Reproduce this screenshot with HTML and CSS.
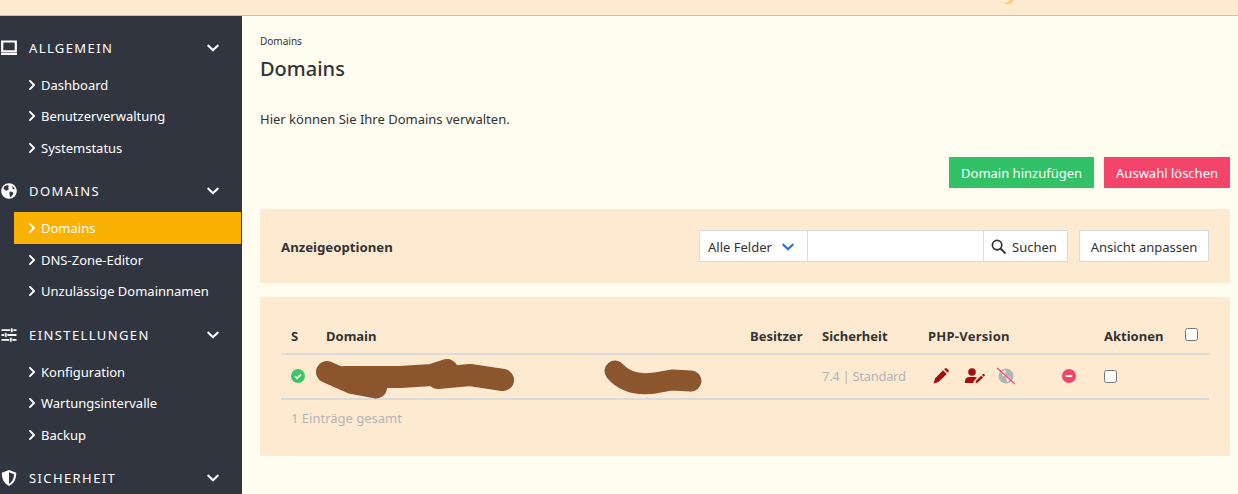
FILE: index.html
```html
<!DOCTYPE html>
<html lang="de">
<head>
<meta charset="utf-8">
<title>Domains</title>
<link rel="stylesheet" href="styles.css">
</head>
<body>
<header class="topbar">
  <svg class="swoosh" width="10" height="4" viewBox="0 0 10 4"><path d="M0 2.6C3 3 5 2.4 7 0h2.4C8 2.6 6 4 3 4 1.600 4 .6 3.400 0 2.600z" fill="#fbc25e"/></svg>
</header>
<div class="shell">
  <nav class="sidebar">
    <div class="nav-head">
      <svg class="nav-icon" viewBox="0 0 18 16"><path d="M2.200 1.500h13.600v9.800H2.200z" fill="none" stroke="#fff" stroke-width="2.200"/><path d="M1 13h16v2H1z" fill="#fff"/></svg>
      <span class="nav-title">ALLGEMEIN</span>
      <svg class="nav-chev" viewBox="0 0 448 512"><path d="M207.029 381.476L12.686 187.132c-9.373-9.373-9.373-24.569 0-33.941l22.667-22.667c9.357-9.357 24.522-9.375 33.901-.04L224 284.505l154.745-154.021c9.379-9.335 24.544-9.317 33.901.04l22.667 22.667c9.373 9.373 9.373 24.569 0 33.941L240.971 381.476c-9.373 9.372-24.569 9.372-33.942 0z"/></svg>
    </div>
    <ul class="nav-list">
      <li class="nav-item"><svg class="item-chev" viewBox="0 0 320 512"><path d="M285.476 272.971L91.132 467.314c-9.373 9.373-24.569 9.373-33.941 0l-22.667-22.667c-9.357-9.357-9.375-24.522-.04-33.901L188.505 256 34.484 101.255c-9.335-9.379-9.317-24.544.04-33.901l22.667-22.667c9.373-9.373 24.569-9.373 33.941 0L285.475 239.030c9.373 9.372 9.373 24.568.001 33.941z"/></svg>Dashboard</li>
      <li class="nav-item"><svg class="item-chev" viewBox="0 0 320 512"><path d="M285.476 272.971L91.132 467.314c-9.373 9.373-24.569 9.373-33.941 0l-22.667-22.667c-9.357-9.357-9.375-24.522-.04-33.901L188.505 256 34.484 101.255c-9.335-9.379-9.317-24.544.04-33.901l22.667-22.667c9.373-9.373 24.569-9.373 33.941 0L285.475 239.030c9.373 9.372 9.373 24.568.001 33.941z"/></svg>Benutzerverwaltung</li>
      <li class="nav-item"><svg class="item-chev" viewBox="0 0 320 512"><path d="M285.476 272.971L91.132 467.314c-9.373 9.373-24.569 9.373-33.941 0l-22.667-22.667c-9.357-9.357-9.375-24.522-.04-33.901L188.505 256 34.484 101.255c-9.335-9.379-9.317-24.544.04-33.901l22.667-22.667c9.373-9.373 24.569-9.373 33.941 0L285.475 239.030c9.373 9.372 9.373 24.568.001 33.941z"/></svg>Systemstatus</li>
    </ul>
    <div class="nav-head">
      <svg class="nav-icon" viewBox="0 0 16 16"><circle cx="8" cy="8" r="7.800" fill="#fff"/><path d="M3 3.500l3.500-1.500 1.500 1-1 1.500 1 1.500-2 1.500-1.500 0-2-2zM8.500 8.500l3 .5 1 1.500-2 3-1.500.5-.5-2.500zM11 2.800l2 1.700.8 2-2-.5z" fill="#31353f"/></svg>
      <span class="nav-title">DOMAINS</span>
      <svg class="nav-chev" viewBox="0 0 448 512"><path d="M207.029 381.476L12.686 187.132c-9.373-9.373-9.373-24.569 0-33.941l22.667-22.667c9.357-9.357 24.522-9.375 33.901-.04L224 284.505l154.745-154.021c9.379-9.335 24.544-9.317 33.901.04l22.667 22.667c9.373 9.373 9.373 24.569 0 33.941L240.971 381.476c-9.373 9.372-24.569 9.372-33.942 0z"/></svg>
    </div>
    <ul class="nav-list nav-list-wide">
      <li class="nav-item is-active"><svg class="item-chev" viewBox="0 0 320 512"><path d="M285.476 272.971L91.132 467.314c-9.373 9.373-24.569 9.373-33.941 0l-22.667-22.667c-9.357-9.357-9.375-24.522-.04-33.901L188.505 256 34.484 101.255c-9.335-9.379-9.317-24.544.04-33.901l22.667-22.667c9.373-9.373 24.569-9.373 33.941 0L285.475 239.030c9.373 9.372 9.373 24.568.001 33.941z"/></svg>Domains</li>
      <li class="nav-item"><svg class="item-chev" viewBox="0 0 320 512"><path d="M285.476 272.971L91.132 467.314c-9.373 9.373-24.569 9.373-33.941 0l-22.667-22.667c-9.357-9.357-9.375-24.522-.04-33.901L188.505 256 34.484 101.255c-9.335-9.379-9.317-24.544.04-33.901l22.667-22.667c9.373-9.373 24.569-9.373 33.941 0L285.475 239.030c9.373 9.372 9.373 24.568.001 33.941z"/></svg>DNS-Zone-Editor</li>
      <li class="nav-item"><svg class="item-chev" viewBox="0 0 320 512"><path d="M285.476 272.971L91.132 467.314c-9.373 9.373-24.569 9.373-33.941 0l-22.667-22.667c-9.357-9.357-9.375-24.522-.04-33.901L188.505 256 34.484 101.255c-9.335-9.379-9.317-24.544.04-33.901l22.667-22.667c9.373-9.373 24.569-9.373 33.941 0L285.475 239.030c9.373 9.372 9.373 24.568.001 33.941z"/></svg>Unzulässige Domainnamen</li>
    </ul>
    <div class="nav-head">
      <svg class="nav-icon" viewBox="0 0 16 16"><path d="M.5 2.300h15v1.800H.5zM.5 7.100h15v1.800H.5zM.5 11.900h15v1.800H.5z" fill="#fff"/><path d="M9.500 1h2.600v4.400H9.500zM3.500 5.800h2.600v4.400H3.500zM8.500 10.600h2.600V15H8.500z" fill="#fff" stroke="#31353f" stroke-width=".7"/></svg>
      <span class="nav-title">EINSTELLUNGEN</span>
      <svg class="nav-chev" viewBox="0 0 448 512"><path d="M207.029 381.476L12.686 187.132c-9.373-9.373-9.373-24.569 0-33.941l22.667-22.667c9.357-9.357 24.522-9.375 33.901-.04L224 284.505l154.745-154.021c9.379-9.335 24.544-9.317 33.901.04l22.667 22.667c9.373 9.373 9.373 24.569 0 33.941L240.971 381.476c-9.373 9.372-24.569 9.372-33.942 0z"/></svg>
    </div>
    <ul class="nav-list">
      <li class="nav-item"><svg class="item-chev" viewBox="0 0 320 512"><path d="M285.476 272.971L91.132 467.314c-9.373 9.373-24.569 9.373-33.941 0l-22.667-22.667c-9.357-9.357-9.375-24.522-.04-33.901L188.505 256 34.484 101.255c-9.335-9.379-9.317-24.544.04-33.901l22.667-22.667c9.373-9.373 24.569-9.373 33.941 0L285.475 239.030c9.373 9.372 9.373 24.568.001 33.941z"/></svg>Konfiguration</li>
      <li class="nav-item"><svg class="item-chev" viewBox="0 0 320 512"><path d="M285.476 272.971L91.132 467.314c-9.373 9.373-24.569 9.373-33.941 0l-22.667-22.667c-9.357-9.357-9.375-24.522-.04-33.901L188.505 256 34.484 101.255c-9.335-9.379-9.317-24.544.04-33.901l22.667-22.667c9.373-9.373 24.569-9.373 33.941 0L285.475 239.030c9.373 9.372 9.373 24.568.001 33.941z"/></svg>Wartungsintervalle</li>
      <li class="nav-item"><svg class="item-chev" viewBox="0 0 320 512"><path d="M285.476 272.971L91.132 467.314c-9.373 9.373-24.569 9.373-33.941 0l-22.667-22.667c-9.357-9.357-9.375-24.522-.04-33.901L188.505 256 34.484 101.255c-9.335-9.379-9.317-24.544.04-33.901l22.667-22.667c9.373-9.373 24.569-9.373 33.941 0L285.475 239.030c9.373 9.372 9.373 24.568.001 33.941z"/></svg>Backup</li>
    </ul>
    <div class="nav-head">
      <svg class="nav-icon" viewBox="0 0 16 16"><path d="M8 0l7.200 2.800c0 6-1.700 10.400-7.200 13.200C2.500 13.200.8 8.800.8 2.800z" fill="#fff"/><path d="M8 2.300l5 1.900c-.1 4.300-1.400 7.500-5 9.500z" fill="#31353f"/></svg>
      <span class="nav-title">SICHERHEIT</span>
      <svg class="nav-chev" viewBox="0 0 448 512"><path d="M207.029 381.476L12.686 187.132c-9.373-9.373-9.373-24.569 0-33.941l22.667-22.667c9.357-9.357 24.522-9.375 33.901-.04L224 284.505l154.745-154.021c9.379-9.335 24.544-9.317 33.901.04l22.667 22.667c9.373 9.373 9.373 24.569 0 33.941L240.971 381.476c-9.373 9.372-24.569 9.372-33.942 0z"/></svg>
    </div>
  </nav>

  <main class="content">
    <div class="crumb">Domains</div>
    <h1 class="page-title">Domains</h1>
    <p class="lead">Hier können Sie Ihre Domains verwalten.</p>
    <div class="actions">
      <button class="btn btn-green">Domain hinzufügen</button>
      <button class="btn btn-red">Auswahl löschen</button>
    </div>

    <section class="panel options">
      <strong class="options-title">Anzeigeoptionen</strong>
      <div class="search">
        <div class="search-field">Alle Felder
          <svg class="select-chev" viewBox="0 0 448 512"><path d="M207.029 381.476L12.686 187.132c-9.373-9.373-9.373-24.569 0-33.941l22.667-22.667c9.357-9.357 24.522-9.375 33.901-.04L224 284.505l154.745-154.021c9.379-9.335 24.544-9.317 33.901.04l22.667 22.667c9.373 9.373 9.373 24.569 0 33.941L240.971 381.476c-9.373 9.372-24.569 9.372-33.942 0z"/></svg>
        </div>
        <div class="search-input"></div>
        <div class="search-btn">
          <svg class="search-icon" viewBox="0 0 16 16"><circle cx="6.500" cy="6.500" r="5" fill="none" stroke="#333" stroke-width="1.800"/><path d="M10.300 10.300l4.500 4.500" stroke="#333" stroke-width="2.200" stroke-linecap="round"/></svg>
          Suchen
        </div>
      </div>
      <div class="view-btn">Ansicht anpassen</div>
    </section>

    <section class="panel listing">
      <table class="table">
        <colgroup>
          <col class="c-s"><col class="c-domain"><col class="c-owner"><col class="c-sec"><col class="c-php"><col class="c-act">
        </colgroup>
        <thead>
          <tr>
            <th>S</th><th>Domain</th><th>Besitzer</th><th>Sicherheit</th><th class="th-php">PHP-Version</th>
            <th><span class="act-head">Aktionen <span class="check check-head"></span></span></th>
          </tr>
        </thead>
        <tbody>
          <tr>
            <td><svg class="status" viewBox="0 0 14 14"><circle cx="7" cy="7" r="7" fill="#3ec46d"/><path d="M4 7.300l2.100 2.100L10 5.300" fill="none" stroke="#fff" stroke-width="1.700"/></svg></td>
            <td class="domain-cell">
              <svg class="scribble" width="400" height="44" viewBox="316 360 400 44">
                <g fill="none" stroke="#8b552e" stroke-linecap="round" stroke-linejoin="round">
                  <path d="M327 373L352 384L376 388.500" stroke-width="22"/>
                  <path d="M345 378L400 378L432 376L447 371" stroke-width="22"/>
                  <path d="M438 379L470 376L503 381" stroke-width="22"/>
                  <path d="M615 372C625 384 640 386 655 384L672 381L691 382" stroke-width="21"/>
                </g>
              </svg>
            </td>
            <td></td>
            <td class="muted">7.4 | Standard</td>
            <td>
              <div class="row-icons">
                <svg class="ri ri-pencil" viewBox="0 0 16 16"><path d="M10 2.300l3.700 3.700L5.600 14 .6 15.400 2 10.400zM11.200 1.200l.6-.6c.6-.6 1.500-.6 2.100 0l1.500 1.500c.6.6.6 1.500 0 2.100l-.6.6z" fill="#a80d0d"/></svg>
                <svg class="ri ri-user" viewBox="0 0 20 16"><circle cx="7" cy="4" r="3.800" fill="#a80d0d"/><path d="M0 15v-1.600C0 10.500 2 9 4.500 9h5c1 0 1.800.3 2.500.7L8.800 13l-.5 2z" fill="#a80d0d"/><path d="M10.500 15l.5-2.200 5.200-5 1.800 1.800-5.200 5zM17 7l1-.9c.4-.3.800-.3 1.100 0l.6.6c.3.3.3.700 0 1l-1 1z" fill="#a80d0d"/></svg>
                <svg class="ri ri-globe" viewBox="0 0 18 18"><circle cx="9" cy="9" r="7.500" fill="#b4b4b4"/><path d="M4.500 5l3-2 1.500 1-1 2 1 1.500-2 1.500-1.500 0zM9.500 9.500l3 .5 1 1.500-2 3-1.500.5-.5-2.500z" fill="#feead0"/><path d="M0 1l18 16" stroke="#f3456a" stroke-width="1.200"/></svg>
                <svg class="ri ri-minus" viewBox="0 0 14 14"><circle cx="7" cy="7" r="7" fill="#f3456a"/><rect x="3.800" y="6.100" width="6.400" height="1.800" rx=".5" fill="#fff"/></svg>
              </div>
            </td>
            <td><span class="check"></span></td>
          </tr>
        </tbody>
      </table>
      <div class="total">1 Einträge gesamt</div>
    </section>
  </main>
</div>
</body>
</html>
```

FILE: styles.css
```css
* { box-sizing: border-box; }
html, body { margin: 0; height: 494px; overflow: hidden; }
body {
  background: #fffcf0;
  color: #333;
  font-family: "Noto Sans", "Open Sans", sans-serif;
  font-size: 13px;
}
.topbar {
  position: relative;
  height: 16px;
  background: #feead0;
  border-bottom: 1px solid #e8bc78;
}
.swoosh { position: absolute; left: 1004px; top: 0; }
.shell { display: flex; height: 478px; }

/* sidebar */
.sidebar {
  flex: 0 0 242px;
  background: #31353f;
  color: #fff;
  overflow: hidden;
  padding-top: 17px;
}
.nav-head {
  display: flex;
  align-items: center;
  height: 30px;
}
.nav-icon { width: 18px; height: 16px; margin-right: 11px; flex: none; }
.nav-title { flex: 1; font-size: 13px; letter-spacing: 1.400px; }
.nav-chev { width: 12px; height: 14px; fill: #fff; margin-right: 23px; flex: none; }
.nav-list { list-style: none; margin: 0; padding: 6px 0 12.800px; }
.nav-list-wide { padding-bottom: 13.200px; }
.nav-item {
  display: flex;
  align-items: center;
  height: 31.500px;
  margin-left: 14px;
  margin-right: 1px;
  padding-left: 14px;
}
.nav-item.is-active { background: #f9b104; }
.item-chev { width: 8px; height: 12px; fill: #fff; margin-right: 5px; flex: none; }

/* content */
.content { flex: 1; padding: 18px 8px 0 18px; min-width: 0; }
.crumb { font-size: 10px; line-height: 14px; }
.page-title { margin: 7px 0 0; font-size: 20px; font-weight: 500; line-height: 28px; }
.lead { margin: 26px 0 0; line-height: 20px; }
.actions { display: flex; justify-content: flex-end; gap: 10px; margin-top: 28px; }
.btn {
  height: 31px;
  border: 0;
  padding: 0 12px;
  color: #fff;
  font: inherit;
}
.btn-green { background: #32c167; }
.btn-red { background: #f3456a; }

.panel { background: #feead0; }
.options {
  display: flex;
  align-items: center;
  height: 74px;
  margin-top: 21px;
  padding: 0 21px;
}
.options-title { flex: 1; font-weight: 700; font-size: 13.200px; padding-top: 2px; }
.search { display: flex; height: 32px; background: #fff; border: 1px solid #dbdbdb; }
.search-field {
  display: flex;
  align-items: center;
  justify-content: space-between;
  width: 108px;
  padding: 1px 13px 0 8px;
  border-right: 1px solid #dbdbdb;
}
.select-chev { width: 12px; height: 14px; fill: #2a6fdb; }
.search-input { width: 175px; }
.search-btn {
  display: flex;
  align-items: center;
  gap: 6px;
  width: 84px;
  padding: 1px 0 0 7px;
  border-left: 1px solid #dbdbdb;
}
.search-icon { width: 15px; height: 15px; }
.view-btn {
  display: flex;
  align-items: center;
  justify-content: center;
  width: 130px;
  height: 32px;
  margin-left: 11px;
  padding-top: 1px;
  background: #fff;
  border: 1px solid #dbdbdb;
}

.listing { height: 159px; margin-top: 14px; padding: 22px 21px 0; }
.table { width: 100%; border-collapse: collapse; table-layout: fixed; }
.c-s { width: 35px; }
.c-domain { width: 424px; }
.c-owner { width: 72px; }
.c-sec { width: 106px; }
.c-php { width: 176px; }
.table th {
  height: 35px;
  padding: 0 10px;
  text-align: left;
  font-weight: 700;
  white-space: nowrap;
  border-bottom: 2px solid #dbdbdb;
}
.table .th-php { letter-spacing: .25px; }
.table td {
  height: 45px;
  padding: 0 10px 1px;
  white-space: nowrap;
  border-bottom: 2px solid #dbdbdb;
}
.act-head { display: flex; justify-content: space-between; align-items: center; }
.check {
  display: block;
  width: 13px;
  height: 13px;
  background: #fff;
  border: 1px solid #767676;
  border-radius: 2.500px;
}
.check-head { margin-right: 1px; margin-top: -3px; }
.muted { color: #b5b5b5; letter-spacing: -.3px; }
.status { display: block; width: 14px; height: 14px; }
.domain-cell { position: relative; }
.scribble { position: absolute; left: 0; top: 4px; }
.row-icons { display: flex; align-items: center; padding-left: 5px; }
.ri { width: 16px; height: 16px; flex: none; }
.ri-user { width: 20px; margin-left: 16px; }
.ri-globe { width: 18px; height: 18px; margin-left: 12px; }
.ri-minus { width: 14px; height: 14px; margin-left: 47px; }
.total { margin-top: 8px; padding-left: 10px; color: #b5b5b5; line-height: 20px; }
```
